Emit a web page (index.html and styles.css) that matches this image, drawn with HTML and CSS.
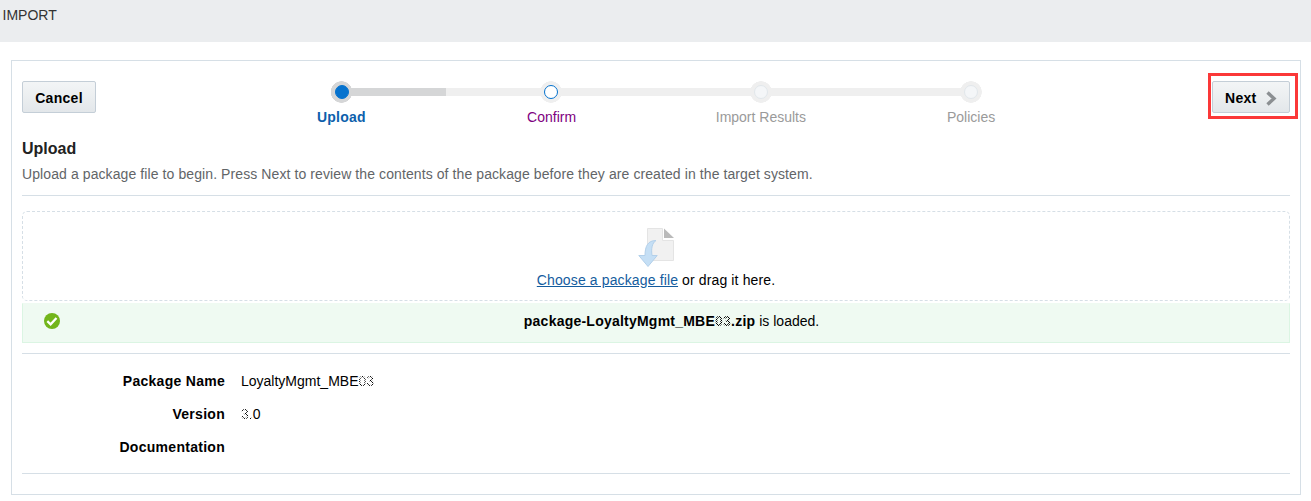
FILE: index.html
```
<!DOCTYPE html>
<html lang="en">
<head>
<meta charset="utf-8">
<title>Import</title>
<link rel="stylesheet" href="styles.css">
</head>
<body>
<header class="banner">IMPORT</header>
<main class="panel">
  <div class="toolbar">
    <button class="btn">Cancel</button>
    <ol class="train">
      <li class="step current"><span class="node"><i></i></span><span class="label">Upload</span></li>
      <li class="step available"><span class="node"><i></i></span><span class="label">Confirm</span></li>
      <li class="step"><span class="node"><i></i></span><span class="label">Import Results</span></li>
      <li class="step"><span class="node"><i></i></span><span class="label">Policies</span></li>
    </ol>
    <div class="next-wrap">
      <button class="btn btn-next">Next
        <svg width="11" height="15" viewBox="0 0 11 15"><path d="M1.5 1.5 8 7.5 1.5 13.5" fill="none" stroke="#8b8f92" stroke-width="3.4"/></svg>
      </button>
      <span class="highlight"></span>
    </div>
  </div>
  <h1 class="title">Upload</h1>
  <p class="intro">Upload a package file to begin. Press Next to review the contents of the package before they are created in the target system.</p>
  <section class="dropzone">
    <svg class="drop-icon" width="38" height="40" viewBox="0 0 38 40">
      <path d="M9.5 .5H24.500V12.500H35.500V32.500H9.500Z" fill="#f1f1f1" stroke="#e4e4e4"/>
      <path d="M26 .5V10H36Z" fill="#bababa"/>
      <path d="M18 12.500C10 12.500 7 18 7 27.500H.800L10 38.500 19.200 27.500H14C13 21 14 15 18 12.500Z" fill="#c5dff5" stroke="#b3d0ea"/>
    </svg>
    <div class="drop-text"><a class="link" href="#">Choose a package file</a> or drag it here.</div>
  </section>
  <section class="status">
    <svg class="ok" width="16" height="16" viewBox="0 0 16 16"><circle cx="8" cy="8" r="8" fill="#72b51b"/><path d="M3.300 8.200 6.600 11.300 12.500 5" fill="none" stroke="#fff" stroke-width="2.300"/></svg>
    <span><b>package-LoyaltyMgmt_MBE<span class="faded">03</span>.zip</b> is loaded.</span>
  </section>
  <dl class="details">
    <dt>Package Name</dt><dd>LoyaltyMgmt_MBE<span class="faded">03</span></dd>
    <dt>Version</dt><dd><span class="faded">3.</span>0</dd>
    <dt>Documentation</dt><dd></dd>
  </dl>
</main>
</body>
</html>
```

FILE: styles.css
```
* { box-sizing: border-box; }
body {
  margin: 0;
  background: #fff;
  color: #000;
  font: 14px/16px "Liberation Sans", Arial, sans-serif;
}
.banner {
  height: 42px;
  padding: 7px 2.5px;
  background: #ebedef;
  color: #333;
}
.panel {
  width: 1290px;
  height: 435px;
  margin: 18px 0 0 11px;
  padding: 20px 10px 0;
  border: 1px solid #d6dfe6;
}
.toolbar {
  display: flex;
  justify-content: space-between;
  height: 57px;
}
.btn {
  height: 32px;
  width: 74px;
  padding: 2px 0 0;
  border: 1px solid #c4ced7;
  border-radius: 2px;
  background: linear-gradient(#f3f5f6, #e3e7ea);
  color: #000;
  font: bold 14px/16px "Liberation Sans", Arial, sans-serif;
  letter-spacing: .3px;
}
.next-wrap { position: relative; }
.btn-next {
  display: flex;
  align-items: center;
  gap: 9px;
  width: 78px;
  padding-left: 12px;
}
.highlight {
  position: absolute;
  left: -4px;
  top: -8px;
  width: 90px;
  height: 46px;
  border: 3px solid #fb3838;
}
.train {
  display: flex;
  width: 839px;
  margin: 0 0 0 4px;
  padding: 0;
  list-style: none;
}
.step {
  flex: 1;
  display: flex;
  flex-direction: column;
  align-items: center;
  gap: 6px;
  color: #9a9a9a;
}
.node {
  display: grid;
  place-items: center;
  width: 100%;
  height: 22px;
  background:
    radial-gradient(circle at center, #efefef 10.500px, transparent 11px),
    linear-gradient(#efefef, #efefef) 0 7px / 100% 8px no-repeat;
}
.step:last-child .node {
  background:
    radial-gradient(circle at center, #efefef 10.500px, transparent 11px),
    linear-gradient(#efefef, #efefef) 0 7px / 50% 8px no-repeat;
}
.current .node {
  background:
    radial-gradient(circle at center, #d5d6d7 10.500px, transparent 11px),
    linear-gradient(#d5d6d7, #d5d6d7) 100% 7px / 50% 8px no-repeat;
}
.node i {
  width: 14px;
  height: 14px;
  border: 1px solid #e1e7eb;
  border-radius: 50%;
  background: #f4f6f8;
}
.current i { margin-left: 1px; border-color: #0572ce; background: #0572ce; }
.available i { border-color: #0572ce; background: #fff; }
.current .label { color: #0d5fac; font-weight: bold; letter-spacing: .2px; }
.available .label { padding-left: 1px; color: #800080; }
.step:last-child .label { padding-left: 1px; }
.title { margin: 0; padding-top: 1px; height: 20px; font-size: 16px; line-height: 20px; color: #222; }
.intro {
  height: 38px;
  margin: 0;
  padding-top: 8px;
  border-bottom: 1px solid #d6dfe6;
  color: #626568;
  letter-spacing: .093px;
}
.dropzone {
  display: flex;
  flex-direction: column;
  align-items: center;
  gap: 4px;
  height: 90px;
  margin-top: 15px;
  padding-top: 16px;
  border: 1px dashed #d6dfe6;
  border-radius: 5px;
}
.drop-icon { margin-left: 2px; }
.drop-text { letter-spacing: .13px; }
.link { color: #145c9e; }
.status {
  display: grid;
  grid-template-columns: 31px 1fr;
  justify-items: center;
  height: 40px;
  margin-top: 2px;
  padding: 9px 0 0;
  border: 1px solid #dbf5e3;
  border-top-color: #effaf2;
  background: #effaf2;
}
.status b { letter-spacing: .23px; }
.ok { justify-self: end; margin-right: -6px; }
.faded {
  color: transparent;
  background: conic-gradient(#000 25%, transparent 0 50%, #000 0 75%, transparent 0) 0 0 / 2px 2px;
  background-clip: text;
  -webkit-background-clip: text;
}
.details {
  display: grid;
  grid-template-columns: 203px 1fr;
  grid-auto-rows: 33px;
  column-gap: 16px;
  height: 121px;
  margin: 10px 0 0;
  padding-top: 19px;
  border: solid #d6dfe6;
  border-width: 1px 0;
}
.details dt { font-weight: bold; text-align: right; letter-spacing: .28px; }
.details dd { margin: 0; }
```
